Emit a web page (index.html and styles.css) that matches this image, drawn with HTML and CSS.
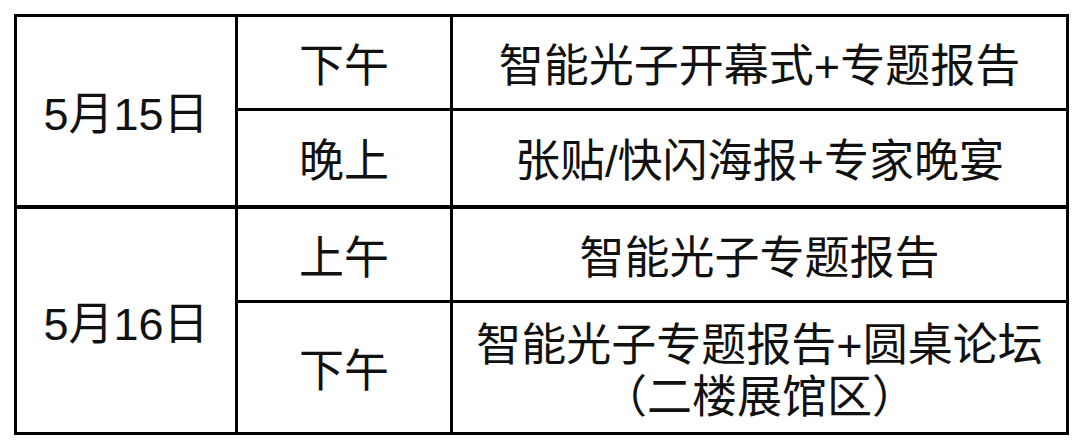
FILE: index.html
```html
<!DOCTYPE html>
<html lang="zh-CN">
<head>
<meta charset="utf-8">
<title>日程</title>
<link rel="stylesheet" href="styles.css">
</head>
<body>
<div class="page">
  <table class="schedule">
    <colgroup>
      <col class="col-date">
      <col class="col-time">
      <col class="col-event">
    </colgroup>
    <tbody>
      <tr class="r1">
        <td class="date" rowspan="2">5月15日</td>
        <td>下午</td>
        <td>智能光子开幕式+专题报告</td>
      </tr>
      <tr class="r2">
        <td>晚上</td>
        <td>张贴/快闪海报+专家晚宴</td>
      </tr>
      <tr class="r3 day-start">
        <td class="date" rowspan="2">5月16日</td>
        <td>上午</td>
        <td>智能光子专题报告</td>
      </tr>
      <tr class="r4">
        <td>下午</td>
        <td class="multi"><div class="line">智能光子专题报告+圆桌论坛</div><div class="line">（二楼展馆区）</div></td>
      </tr>
    </tbody>
  </table>
</div>
</body>
</html>
```

FILE: styles.css
```css
html, body {
  margin: 0;
  padding: 0;
  background: #ffffff;
}

.page {
  padding: 14px 0 0 14px;
}

.schedule {
  width: 1052px;
  border-collapse: collapse;
  table-layout: fixed;
  border: 3px solid #000;
  font-family: "Liberation Sans", "Noto Sans CJK SC", sans-serif;
  font-size: 45px;
  color: #111;
}

.col-date { width: 221px; }
.col-time { width: 215px; }
.col-event { width: 616px; }

.schedule td {
  border: 3px solid #000;
  text-align: center;
  vertical-align: middle;
  padding: 8px 0 0 0;
  line-height: 54px;
}

.r1 td { height: 83px; }
.r2 td { height: 86px; }
.r3 td { height: 83px; }
.r4 td { height: 121px; }

.day-start td {
  border-top: 4px solid #000;
}

.multi .line {
  line-height: 52px;
}
```
